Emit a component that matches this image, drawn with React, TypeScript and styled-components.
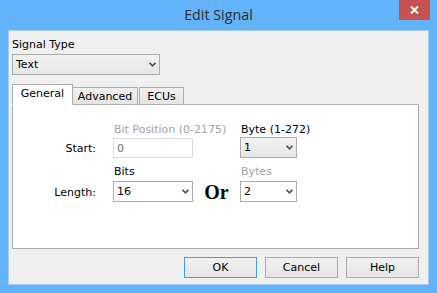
import React from 'react';
import styled, { createGlobalStyle } from 'styled-components';

const GlobalStyle = createGlobalStyle`
  html, body {
    margin: 0;
    padding: 0;
    background: #ffffff;
  }
  body {
    font-family: 'DejaVu Sans', Tahoma, sans-serif;
    font-size: 11px;
    color: #000000;
  }
`;

const Window = styled.div`
  width: 437px;
  height: 293px;
  box-sizing: border-box;
  background: #63b3fb;
  padding: 0 8px 8px;
  display: flex;
  flex-direction: column;
`;

const TitleBar = styled.div`
  height: 30px;
  flex: none;
  margin: 0 -1px 0 -1px;
  display: grid;
  grid-template-columns: 31px 1fr 31px;
  align-items: start;
`;

const Title = styled.div`
  grid-column: 2;
  text-align: center;
  font-family: 'Open Sans', 'Noto Sans', sans-serif;
  font-size: 14.3px;
  line-height: 30px;
  color: #2e2e2e;
`;

const CloseButton = styled.div`
  grid-column: 3;
  height: 20px;
  background: #c75050;
  display: flex;
  align-items: center;
  justify-content: center;
`;

const Client = styled.div`
  flex: 1;
  border: 1px solid #a9cdee;
  background: #f0f0f0;
  padding: 7px 9px 0 3px;
  display: flex;
  flex-direction: column;
`;

const Label = styled.div<{ $disabled?: boolean }>`
  line-height: 13px;
  white-space: nowrap;
  color: ${p => (p.$disabled ? '#a3a3a3' : '#000000')};
`;

const SelectBox = styled.div<{ $width: number; $editable?: boolean }>`
  width: ${p => p.$width}px;
  height: 21px;
  box-sizing: border-box;
  border: 1px solid #acacac;
  background: ${p =>
    p.$editable ? '#ffffff' : 'linear-gradient(#f2f2f2, #e6e6e6)'};
  display: flex;
  align-items: center;
  justify-content: space-between;
  padding: 0 3px 0 3px;
  line-height: 13px;
`;

const TextBox = styled.div<{ $width: number }>`
  width: ${p => p.$width}px;
  height: 20px;
  box-sizing: border-box;
  border: 1px solid #d9d9d9;
  background: #ffffff;
  color: #6d6d6d;
  display: flex;
  align-items: center;
  padding: 0 3px;
`;

const TypeLabel = styled(Label)`
  margin-bottom: 3px;
`;

const TabStrip = styled.div`
  margin-top: 9px;
  height: 21px;
  display: flex;
  align-items: flex-end;
  margin-bottom: -1px;
`;

const Tab = styled.div<{ $width: number; $active?: boolean; $gap?: number }>`
  width: ${p => p.$width}px;
  height: ${p => (p.$active ? 21 : 18)}px;
  margin-left: ${p => p.$gap ?? 0}px;
  box-sizing: border-box;
  border: 1px solid #acacac;
  border-bottom: ${p => (p.$active ? '1px solid #ffffff' : '1px solid #acacac')};
  background: ${p => (p.$active ? '#ffffff' : 'linear-gradient(#f0f0f0, #e5e5e5)')};
  position: relative;
  z-index: ${p => (p.$active ? 2 : 1)};
  display: flex;
  align-items: center;
  justify-content: center;
  padding-bottom: ${p => (p.$active ? 2 : 0)}px;
`;

const Panel = styled.div`
  height: 145px;
  box-sizing: border-box;
  border: 1px solid #acacac;
  background: #ffffff;
  padding-top: 16px;
  position: relative;
  z-index: 1;
`;

const FieldGrid = styled.div`
  display: grid;
  grid-template-columns: 83px 17px 80px 47px 57px;
  grid-template-rows: 16px 21px 23px 21px;
`;

const RowLabel = styled(Label)<{ $row: number }>`
  grid-column: 1;
  grid-row: ${p => p.$row};
  text-align: right;
  align-self: center;
  margin-top: 2px;
`;

const Caption = styled(Label)<{ $row: number; $col: number }>`
  grid-column: ${p => p.$col};
  grid-row: ${p => p.$row};
  align-self: ${p => (p.$row === 1 ? 'center' : 'end')};
  margin-bottom: ${p => (p.$row === 1 ? 0 : 3)}px;
  padding-left: 1px;
`;

const Cell = styled.div<{ $row: number; $col: number }>`
  grid-column: ${p => p.$col};
  grid-row: ${p => p.$row};
  align-self: end;
`;

const OrText = styled.div`
  grid-column: 4;
  grid-row: 4;
  align-self: center;
  text-align: center;
  font-family: 'Liberation Serif', 'Times New Roman', serif;
  font-weight: bold;
  font-size: 20px;
  line-height: 20px;
  margin-top: 1px;
`;

const ButtonRow = styled.div`
  margin-top: 8px;
  display: flex;
  justify-content: flex-end;
  gap: 8px;
`;

const Button = styled.div<{ $default?: boolean }>`
  width: 73px;
  height: 21px;
  box-sizing: border-box;
  border: 1px solid ${p => (p.$default ? '#3c9bf5' : '#acacac')};
  background: linear-gradient(#f0f0f0, #e5e5e5);
  display: flex;
  align-items: center;
  justify-content: center;
`;

const Chevron = () => (
  <svg width="7" height="5" viewBox="0 0 7 5">
    <polyline
      points="0.5,0.8 3.5,3.8 6.5,0.8"
      fill="none"
      stroke="#505050"
      strokeWidth="1.7"
    />
  </svg>
);

const Select = ({
  value,
  width,
  editable,
}: {
  value: string;
  width: number;
  editable?: boolean;
}) => (
  <SelectBox $width={width} $editable={editable}>
    <span>{value}</span>
    <Chevron />
  </SelectBox>
);

const App = () => {
  return (
    <>
      <GlobalStyle />
      <Window>
        <TitleBar>
          <Title>Edit Signal</Title>
          <CloseButton>
            <svg width="9" height="8" viewBox="0 0 9 8">
              <path d="M1 0.5 L8 7.5 M8 0.5 L1 7.5" stroke="#ffffff" strokeWidth="2" />
            </svg>
          </CloseButton>
        </TitleBar>
        <Client>
          <TypeLabel>Signal Type</TypeLabel>
          <Select value="Text" width={148} />
          <TabStrip>
            <Tab $width={61} $active>General</Tab>
            <Tab $width={66} $gap={-1}>Advanced</Tab>
            <Tab $width={45} $gap={1}>ECUs</Tab>
          </TabStrip>
          <Panel>
            <FieldGrid>
              <Caption $row={1} $col={3} $disabled>
                Bit Position (0-2175)
              </Caption>
              <Caption $row={1} $col={5}>
                Byte (1-272)
              </Caption>
              <RowLabel $row={2}>Start:</RowLabel>
              <Cell $row={2} $col={3}>
                <TextBox $width={80}>0</TextBox>
              </Cell>
              <Cell $row={2} $col={5}>
                <Select value="1" width={57} />
              </Cell>
              <Caption $row={3} $col={3}>
                Bits
              </Caption>
              <Caption $row={3} $col={5} $disabled>
                Bytes
              </Caption>
              <RowLabel $row={4}>Length:</RowLabel>
              <Cell $row={4} $col={3}>
                <Select value="16" width={80} editable />
              </Cell>
              <OrText>Or</OrText>
              <Cell $row={4} $col={5}>
                <Select value="2" width={57} editable />
              </Cell>
            </FieldGrid>
          </Panel>
          <ButtonRow>
            <Button $default>OK</Button>
            <Button>Cancel</Button>
            <Button>Help</Button>
          </ButtonRow>
        </Client>
      </Window>
    </>
  );
};

export default App;
